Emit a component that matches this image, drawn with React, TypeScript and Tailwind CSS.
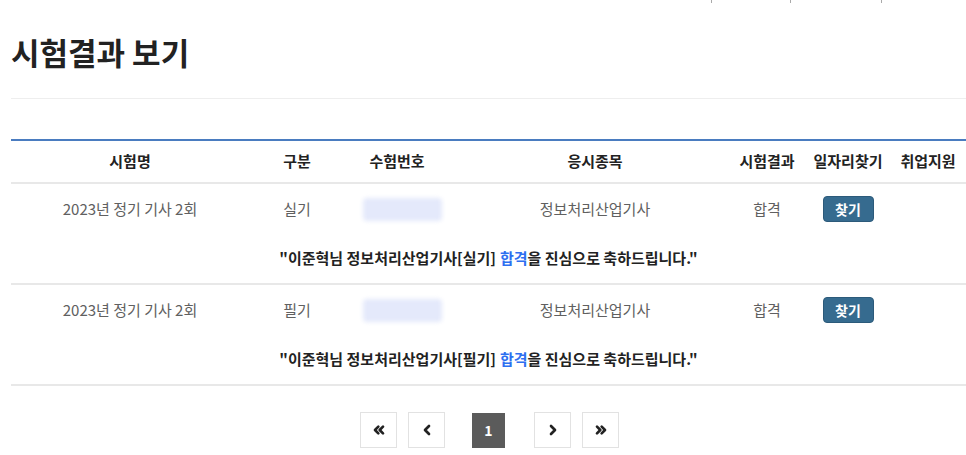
import { ChevronLeft, ChevronRight, ChevronsLeft, ChevronsRight } from "lucide-react";

const results = [
  { name: "2023년 정기 기사 2회", type: "실기", subject: "정보처리산업기사", result: "합격" },
  { name: "2023년 정기 기사 2회", type: "필기", subject: "정보처리산업기사", result: "합격" },
];

const headers = ["시험명", "구분", "수험번호", "응시종목", "시험결과", "일자리찾기", "취업지원"];

const cols = "grid grid-cols-[238px_96px_104px_292px_52px_110px_50px]";

const Cell = ({ children }: { children?: React.ReactNode }) => (
  <div className="flex items-center justify-center whitespace-nowrap">{children}</div>
);

export default function App() {
  return (
    <div className="min-h-[455px] bg-white text-[#222] font-['Noto_Sans_CJK_KR',sans-serif]">
      {/* breadcrumb remnants */}
      <div className="flex h-[3px] pl-[711px]">
        <span className="w-px h-[3px] bg-[#aaa]" />
        <span className="w-px h-[3px] bg-[#aaa] ml-[78px]" />
        <span className="w-px h-[3px] bg-[#aaa] ml-[90px]" />
      </div>

      <div className="pl-[11px]">
        <div className="pt-[30px] pb-[28px] border-b border-[#eeeeee]">
          <h2 className="text-[31px] leading-[37px] font-bold">시험결과 보기</h2>
        </div>

        {/* table */}
        <div className="mt-[40px] border-t-2 border-[#4a7cc0]">
          <div className={`${cols} h-[43px] border-b-2 border-[#e8e8e8] text-[15px] font-bold`}>
            {headers.map((h) => (
              <Cell key={h}>{h}</Cell>
            ))}
          </div>

          {results.map((r, i) => (
            <div key={i} className="border-b-2 border-[#e8e8e8]">
              <div className={`${cols} h-[50px] text-[15px] text-[#606060]`}>
                <Cell>{r.name}</Cell>
                <Cell>{r.type}</Cell>
                <Cell>
                  <div className="w-[79px] h-[23px] ml-[10px] bg-[#e4e9fb] blur-[2px] rounded-sm" />
                </Cell>
                <Cell>{r.subject}</Cell>
                <Cell>{r.result}</Cell>
                <Cell>
                  <button className="w-[51px] h-[26px] rounded-[4px] bg-[#366b8f] text-white text-[14px] font-bold border border-[#2c5a7a]">
                    찾기
                  </button>
                </Cell>
                <Cell />
              </div>
              <div className="h-[49px] flex items-center justify-center text-[15px] font-bold">
                "이준혁님 정보처리산업기사[{r.type}] <span className="text-[#2e6ff0] ml-[4px]">합격</span>을 진심으로 축하드립니다."
              </div>
            </div>
          ))}
        </div>

        {/* pagination */}
        <div className="flex items-center mt-[26px] pl-[349px]">
          <a className="w-[37px] h-[36px] border border-[#e2e2e2] flex items-center justify-center">
            <ChevronsLeft size={16} strokeWidth={4} />
          </a>
          <a className="w-[37px] h-[36px] ml-[11px] border border-[#e2e2e2] flex items-center justify-center">
            <ChevronLeft size={16} strokeWidth={4} />
          </a>
          <span className="w-[33px] h-[35px] ml-[27px] bg-[#5b5b5b] text-white text-[14px] font-bold flex items-center justify-center">
            1
          </span>
          <a className="w-[37px] h-[36px] ml-[29px] border border-[#e2e2e2] flex items-center justify-center">
            <ChevronRight size={16} strokeWidth={4} />
          </a>
          <a className="w-[37px] h-[36px] ml-[11px] border border-[#e2e2e2] flex items-center justify-center">
            <ChevronsRight size={16} strokeWidth={4} />
          </a>
        </div>
      </div>
    </div>
  );
}
